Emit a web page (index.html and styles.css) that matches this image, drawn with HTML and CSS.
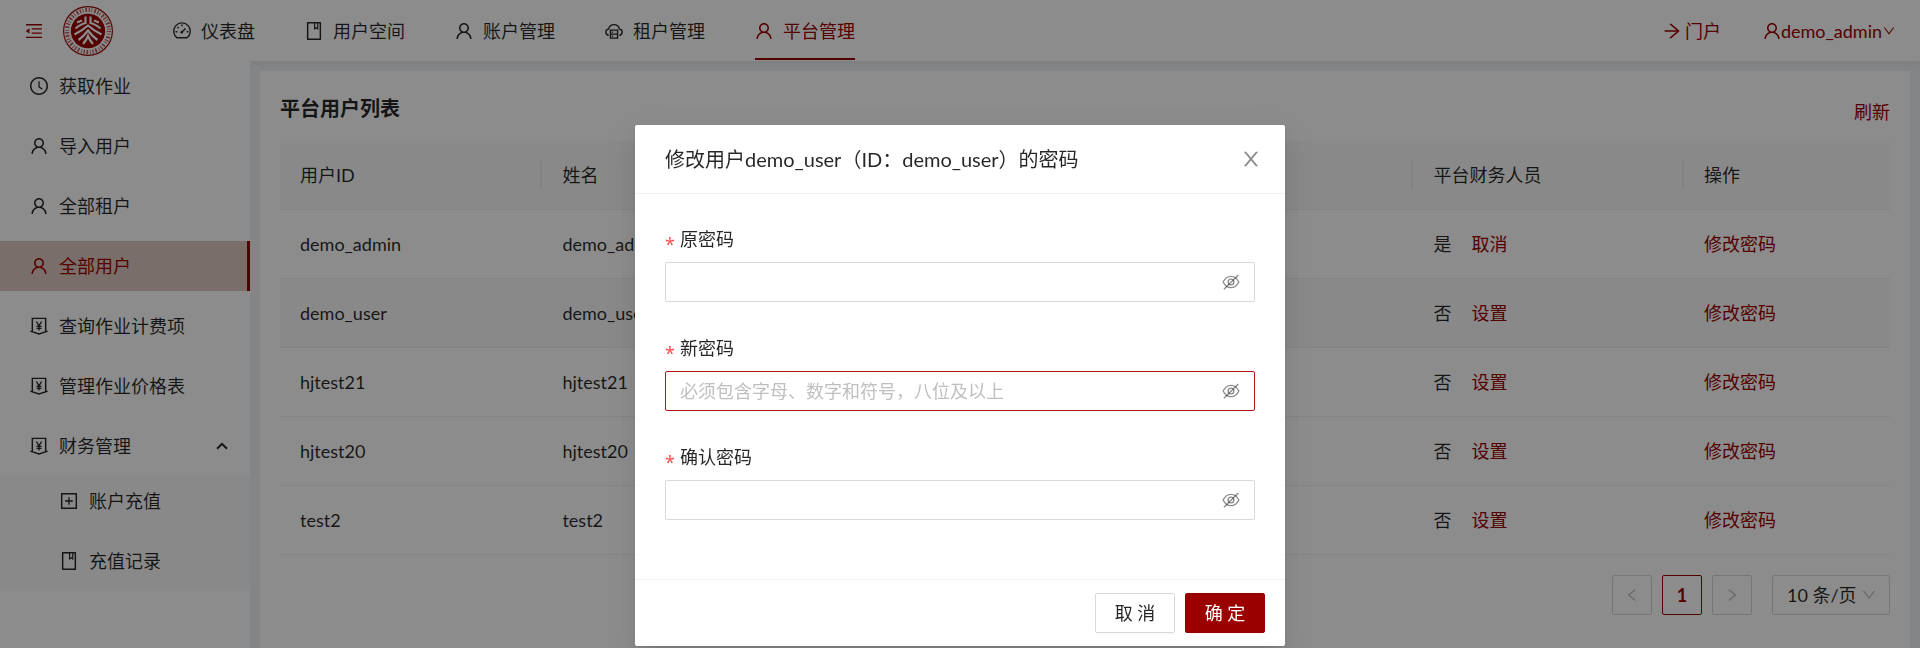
FILE: index.html
```html
<!DOCTYPE html>
<html lang="zh-CN">
<head>
<meta charset="utf-8">
<meta name="viewport" content="width=device-width, initial-scale=1">
<title>平台用户列表</title>
<link rel="stylesheet" href="styles.css">
</head>
<body>
<svg class="sprite" aria-hidden="true">
  <symbol id="i-user" viewBox="64 64 896 896"><path d="M858.5 763.6a374 374 0 00-80.6-119.5 375.63 375.63 0 00-119.5-80.6c-.4-.2-.8-.3-1.2-.5C719.5 518 760 444.7 760 362c0-137-111-248-248-248S264 225 264 362c0 82.7 40.5 156 102.8 201.1-.4.2-.8.3-1.2.5-44.8 18.9-85 46-119.5 80.6a375.63 375.63 0 00-80.6 119.5A371.7 371.7 0 00136 901.8a8 8 0 008 8.2h60c4.4 0 7.9-3.5 8-7.8 2-77.2 33-149.5 87.8-204.3 56.7-56.7 132-87.9 212.2-87.9s155.5 31.2 212.2 87.9C779 752.7 810 825 812 902.2c.1 4.4 3.6 7.8 8 7.8h60a8 8 0 008-8.2c-1-47.8-10.9-94.3-29.5-138.2zM512 534c-45.9 0-89.1-17.9-121.6-50.4S340 407.9 340 362c0-45.9 17.9-89.1 50.4-121.6S466.1 190 512 190s89.1 17.9 121.6 50.4S684 316.1 684 362c0 45.9-17.9 89.1-50.4 121.6S557.9 534 512 534z"/></symbol>
  <symbol id="i-close" viewBox="64 64 896 896"><path d="M563.8 512l262.5-312.9c4.4-5.2.7-13.1-6.1-13.1h-79.8c-4.7 0-9.2 2.1-12.3 5.7L511.6 449.8 295.1 191.7c-3-3.6-7.5-5.7-12.3-5.7H203c-6.8 0-10.5 7.9-6.1 13.1L459.4 512 196.9 824.9A7.95 7.95 0 00203 838h79.8c4.7 0 9.2-2.1 12.3-5.7l216.5-258.1 216.5 258.1c3 3.6 7.5 5.7 12.3 5.7h79.8c6.8 0 10.5-7.9 6.1-13.1L563.8 512z"/></symbol>
  <symbol id="i-clock" viewBox="64 64 896 896"><path d="M512 64C264.6 64 64 264.6 64 512s200.6 448 448 448 448-200.6 448-448S759.4 64 512 64zm0 820c-205.4 0-372-166.6-372-372s166.6-372 372-372 372 166.6 372 372-166.6 372-372 372z"/><path d="M686.7 638.6L544.1 535.5V288c0-4.4-3.6-8-8-8H488c-4.4 0-8 3.6-8 8v275.4c0 2.6 1.2 5 3.3 6.5l165.4 120.6c3.6 2.6 8.6 1.8 11.2-1.7l28.6-39c2.6-3.7 1.8-8.7-1.8-11.2z"/></symbol>
  <symbol id="i-book" viewBox="64 64 896 896"><path d="M832 64H192c-17.7 0-32 14.3-32 32v832c0 17.7 14.3 32 32 32h640c17.7 0 32-14.3 32-32V96c0-17.7-14.3-32-32-32zm-260 72h96v209.9L621.5 312 572 347.4V136zm220 752H232V136h280v296.9c0 3.3 1 6.6 3 9.3a15.9 15.9 0 0022.3 3.7l83.8-59.9 81.4 59.4c2.7 2 6 3.1 9.4 3.1 8.8 0 16-7.2 16-16V136h64v752z"/></symbol>
  <symbol id="i-plus" viewBox="64 64 896 896"><path d="M328 544h152v152c0 4.4 3.6 8 8 8h48c4.4 0 8-3.6 8-8V544h152c4.4 0 8-3.6 8-8v-48c0-4.4-3.6-8-8-8H544V328c0-4.4-3.6-8-8-8h-48c-4.4 0-8 3.6-8 8v152H328c-4.4 0-8 3.6-8 8v48c0 4.4 3.6 8 8 8z"/><path d="M880 112H144c-17.7 0-32 14.3-32 32v736c0 17.7 14.3 32 32 32h736c17.7 0 32-14.3 32-32V144c0-17.7-14.3-32-32-32zm-40 728H184V184h656v656z"/></symbol>
  <symbol id="i-down" viewBox="64 64 896 896"><path d="M884 256h-75c-5.1 0-9.9 2.5-12.9 6.6L512 654.2 227.9 262.6c-3-4.1-7.8-6.6-12.9-6.6h-75c-6.5 0-10.3 7.4-6.5 12.7l352.6 486.1c12.8 17.6 39 17.6 51.7 0l352.6-486.1c3.9-5.3.1-12.7-6.4-12.7z"/></symbol>
  <symbol id="i-left" viewBox="64 64 896 896"><path d="M724 218.3V141c0-6.7-7.7-10.4-12.9-6.3L260.3 486.8a31.86 31.86 0 000 50.3l450.8 352.1c5.3 4.1 12.9.4 12.9-6.3v-77.3c0-4.9-2.3-9.6-6.1-12.6l-360-281 360-281.1c3.8-3 6.1-7.7 6.1-12.6z"/></symbol>
  <symbol id="i-right" viewBox="64 64 896 896"><path d="M765.7 486.8L314.9 134.7A7.97 7.97 0 00302 141v77.3c0 4.9 2.3 9.6 6.1 12.6l360 281.1-360 281.1c-3.9 3-6.1 7.7-6.1 12.6V883c0 6.7 7.7 10.4 12.9 6.3l450.8-352.1a31.96 31.96 0 000-50.4z"/></symbol>
  <symbol id="i-arrow" viewBox="64 64 896 896"><path d="M869 487.8L491.2 159.9c-2.9-2.5-6.6-3.9-10.5-3.9h-88.5c-7.4 0-10.8 9.2-5.2 14l350.2 304H152c-4.4 0-8 3.6-8 8v60c0 4.4 3.6 8 8 8h585.1L386.9 854c-5.6 4.9-2.2 14 5.2 14h91.5c1.9 0 3.8-.7 5.2-2L869 536.2a32.07 32.07 0 000-48.4z"/></symbol>
  <symbol id="i-fold" viewBox="64 64 896 896"><path d="M408 442h480c4.4 0 8-3.6 8-8v-56c0-4.4-3.6-8-8-8H408c-4.4 0-8 3.6-8 8v56c0 4.4 3.6 8 8 8zm-8 204c0 4.4 3.6 8 8 8h480c4.4 0 8-3.6 8-8v-56c0-4.4-3.6-8-8-8H408c-4.4 0-8 3.6-8 8v56zm504-486H120c-4.4 0-8 3.6-8 8v56c0 4.4 3.6 8 8 8h784c4.4 0 8-3.6 8-8v-56c0-4.4-3.6-8-8-8zm0 632H120c-4.4 0-8 3.6-8 8v56c0 4.4 3.6 8 8 8h784c4.4 0 8-3.6 8-8v-56c0-4.4-3.6-8-8-8zM115.4 518.9L271.7 642c5.8 4.6 14.4.5 14.4-6.9V388.9c0-7.4-8.5-11.5-14.4-6.9L115.4 505.1a8.74 8.74 0 000 13.8z"/></symbol>
  <symbol id="i-dash" viewBox="64 64 896 896"><g fill="none" stroke="currentColor" stroke-width="68"><path d="M262 850A412 412 0 1 1 762 850Z" stroke-linejoin="round"/><path d="M512 190v90M190 548h90M744 548h90M290 316l58 58M500 576l190-190"/></g><circle cx="500" cy="580" r="62"/></symbol>
  <symbol id="i-cloud" viewBox="64 64 896 896"><g fill="none" stroke="currentColor" stroke-width="68"><path d="M250 732C60 690 60 440 240 420C310 120 714 120 784 420C964 440 964 690 774 732"/><path d="M334 466h356v400H334zM334 666h356"/><path d="M400 566h70M400 766h70"/></g></symbol>
  <symbol id="i-money" viewBox="64 64 896 896"><g fill="none" stroke="currentColor" stroke-width="72"><path d="M180 790V132h664v658"/><path d="M84 770l102 32 326 108 326-108 102-32"/><path d="M382 290l130 218 130-218M512 500v240M388 530h248M388 634h248" stroke-width="64"/></g></symbol>
  <symbol id="i-eye" viewBox="64 64 896 896"><g fill="none" stroke="currentColor" stroke-width="68"><path d="M120 512C210 330 345 230 512 230S814 330 904 512C814 694 679 794 512 794S210 694 120 512Z"/><circle cx="512" cy="512" r="142"/><path d="M160 876L876 160"/></g></symbol>
  <symbol id="i-caret" viewBox="0 0 12 8"><path d="M1 6.8L6 1.8L11 6.8" fill="none" stroke="currentColor" stroke-width="2"/></symbol>
</svg>

<header class="topbar">
  <button class="fold" type="button" aria-label="收起菜单"><svg class="icon"><use href="#i-fold"/></svg></button>
  <a class="logo" href="#" aria-label="首页">
    <svg viewBox="0 0 50 50">
      <circle cx="25" cy="25" r="24.4" fill="#fff" stroke="#9b0000" stroke-width="1.1"/>
      <circle cx="25" cy="25" r="17.2" fill="#9b0000"/>
      <circle cx="25" cy="25" r="21" fill="none" stroke="#9b0000" stroke-opacity=".65" stroke-width="4.2" stroke-dasharray="1.3 1.5 .8 2 1.8 1.6"/>
      <g fill="none" stroke="#fff" stroke-width="2.2">
        <path d="M22.5 10.5V17Q18 18 12.5 22.500M27.500 10.500V17Q32 18 37.500 22.500"/>
        <path d="M14 16.500L19 14.500M36 16.500L31 14.500"/>
        <path d="M11.500 28.500Q20 24 25 19.500Q30 24 38.500 28.500"/>
        <path d="M15.500 34Q21 30 25 24.500Q29 30 34.500 34"/>
        <path d="M20 38Q23.500 34 25 30Q26.500 34 30 38"/>
      </g>
    </svg>
  </a>
  <nav class="topnav">
    <a href="#"><svg class="icon"><use href="#i-dash"/></svg>仪表盘</a>
    <a href="#"><svg class="icon"><use href="#i-book"/></svg>用户空间</a>
    <a href="#"><svg class="icon"><use href="#i-user"/></svg>账户管理</a>
    <a href="#"><svg class="icon"><use href="#i-cloud"/></svg>租户管理</a>
    <a href="#" class="active"><svg class="icon"><use href="#i-user"/></svg>平台管理</a>
  </nav>
  <div class="account">
    <a href="#" class="portal"><svg class="icon"><use href="#i-arrow"/></svg>门户</a>
    <a href="#" class="me"><svg class="icon"><use href="#i-user"/></svg>demo_admin<svg class="icon tiny"><use href="#i-down"/></svg></a>
  </div>
</header>

<div class="layout">
  <nav class="side">
    <a href="#"><svg class="icon"><use href="#i-clock"/></svg>获取作业</a>
    <a href="#"><svg class="icon"><use href="#i-user"/></svg>导入用户</a>
    <a href="#"><svg class="icon"><use href="#i-user"/></svg>全部租户</a>
    <a href="#" class="active"><svg class="icon"><use href="#i-user"/></svg>全部用户</a>
    <a href="#"><svg class="icon"><use href="#i-money"/></svg>查询作业计费项</a>
    <a href="#"><svg class="icon"><use href="#i-money"/></svg>管理作业价格表</a>
    <a href="#"><svg class="icon"><use href="#i-money"/></svg>财务管理<svg class="caret"><use href="#i-caret"/></svg></a>
    <div class="submenu">
      <a href="#"><svg class="icon"><use href="#i-plus"/></svg>账户充值</a>
      <a href="#"><svg class="icon"><use href="#i-book"/></svg>充值记录</a>
    </div>
  </nav>

  <main class="content">
    <div class="page-head">
      <h1>平台用户列表</h1>
      <a href="#">刷新</a>
    </div>
    <table class="users">
      <colgroup><col class="c-id"><col class="c-name"><col class="c-fin"><col class="c-op"></colgroup>
      <thead><tr><th>用户ID</th><th>姓名</th><th>平台财务人员</th><th>操作</th></tr></thead>
      <tbody>
        <tr><td>demo_admin</td><td>demo_admin</td><td>是<a class="set" href="#">取消</a></td><td><a href="#">修改密码</a></td></tr>
        <tr class="hover"><td>demo_user</td><td>demo_user</td><td>否<a class="set" href="#">设置</a></td><td><a href="#">修改密码</a></td></tr>
        <tr><td>hjtest21</td><td>hjtest21</td><td>否<a class="set" href="#">设置</a></td><td><a href="#">修改密码</a></td></tr>
        <tr><td>hjtest20</td><td>hjtest20</td><td>否<a class="set" href="#">设置</a></td><td><a href="#">修改密码</a></td></tr>
        <tr><td>test2</td><td>test2</td><td>否<a class="set" href="#">设置</a></td><td><a href="#">修改密码</a></td></tr>
      </tbody>
    </table>
    <div class="pager">
      <button type="button" disabled aria-label="上一页"><svg class="icon small"><use href="#i-left"/></svg></button>
      <button type="button" class="current">1</button>
      <button type="button" disabled aria-label="下一页"><svg class="icon small"><use href="#i-right"/></svg></button>
      <div class="size">
        <select aria-label="每页条数"><option>10 条/页</option></select>
        <svg class="icon small"><use href="#i-down"/></svg>
      </div>
    </div>
  </main>
</div>

<div class="mask">
  <form class="modal" role="dialog" aria-labelledby="modal-title">
    <div class="modal-head">
      <h2 id="modal-title">修改用户demo_user（ID：demo_user）的密码</h2>
      <button type="button" class="close" aria-label="关闭"><svg class="icon large"><use href="#i-close"/></svg></button>
    </div>
    <div class="modal-body">
      <div class="field">
        <label for="old">原密码</label>
        <div class="input"><input id="old" type="password"><button type="button" aria-label="显示密码"><svg class="icon"><use href="#i-eye"/></svg></button></div>
      </div>
      <div class="field">
        <label for="new">新密码</label>
        <div class="input focus"><input id="new" type="password" placeholder="必须包含字母、数字和符号，八位及以上"><button type="button" aria-label="显示密码"><svg class="icon"><use href="#i-eye"/></svg></button></div>
      </div>
      <div class="field">
        <label for="again">确认密码</label>
        <div class="input"><input id="again" type="password"><button type="button" aria-label="显示密码"><svg class="icon"><use href="#i-eye"/></svg></button></div>
      </div>
    </div>
    <div class="modal-foot">
      <button type="button" class="btn">取 消</button>
      <button type="button" class="btn primary">确 定</button>
    </div>
  </form>
</div>
</body>
</html>
```

FILE: styles.css
```css
* { box-sizing: border-box; }

:root {
  --primary: #9b0000;
  --text: rgba(0, 0, 0, .85);
  --line: #f0f0f0;
  --border: #d9d9d9;
}

body {
  margin: 0;
  min-height: 100vh;
  display: flex;
  flex-direction: column;
  background: #f0f2f5;
  color: var(--text);
  font: 400 18px/28px Lato, "Noto Sans CJK SC", sans-serif;
  overflow: hidden;
}

a { color: var(--primary); text-decoration: none; }
button, input, select { font: inherit; color: inherit; }
button { cursor: pointer; }
h1, h2 { margin: 0; }

.sprite { position: absolute; width: 0; height: 0; }
.icon { width: 18px; height: 18px; flex: none; fill: currentColor; }
.icon.tiny { width: 12px; height: 12px; margin-left: 1px; }
.icon.small { width: 14px; height: 14px; }
.icon.large { width: 20px; height: 20px; }

.topbar {
  display: flex;
  align-items: center;
  height: 61px;
  padding: 0 25px;
  background: #fff;
  box-shadow: 0 2px 10px rgba(0, 0, 0, .06);
}
.fold { display: flex; padding: 0; border: 0; background: none; color: var(--primary); }
.logo { width: 50px; height: 50px; margin: 0 35px 0 20px; }
.logo svg { display: block; width: 50px; height: 50px; }

.topnav { display: flex; align-self: stretch; margin-bottom: 1px; }
.topnav a {
  display: flex;
  align-items: center;
  gap: 10px;
  margin: 0 25px;
  padding-top: 3px;
  border-bottom: 2px solid transparent;
  color: var(--text);
}
.topnav .active { color: var(--primary); border-color: var(--primary); }

.account { display: flex; gap: 42px; margin-left: auto; }
.account a { display: flex; align-items: center; }
.portal { gap: 4px; }

.layout { flex: 1; display: flex; gap: 10px; padding-right: 10px; }

.side { width: 250px; background: #fff; }
.side a {
  display: flex;
  align-items: center;
  gap: 11px;
  height: 50px;
  margin-bottom: 10px;
  padding: 0 22px 0 30px;
  color: var(--text);
}
.side .active {
  background: #dec8c3;
  color: var(--primary);
  border-right: 3px solid var(--primary);
}
.caret { width: 12px; height: 8px; margin-left: auto; }
.submenu { margin-top: -5px; padding-bottom: 5px; background: #fafafa; }
.submenu a { padding-left: 60px; }
.submenu a:last-child { margin-bottom: 0; }

.content { flex: 1; margin-top: 10px; padding: 20px; background: #fff; }
.page-head { display: flex; justify-content: space-between; align-items: flex-end; height: 35px; margin-bottom: 15px; }
.page-head h1 { font-size: 20px; font-weight: 700; line-height: 36px; }

.users { width: 100%; border-collapse: separate; border-spacing: 0; table-layout: fixed; }
.c-id { width: 16.3%; }
.c-fin { width: 16.8%; }
.c-op { width: 12.8%; }
.users th, .users td { height: 69px; padding: 0 20px; text-align: left; border-bottom: 1px solid var(--line); }
.users th { background: linear-gradient(#ededed, #ededed) right center / 2px 28px no-repeat #fafafa; font-weight: 400; }
.users th:last-child { background: #fafafa; }
.hover td { background: #fafafa; }
.set { margin-left: 20px; }

.pager { display: flex; justify-content: flex-end; gap: 10px; margin-top: 20px; }
.pager button {
  display: flex;
  align-items: center;
  justify-content: center;
  width: 40px;
  height: 40px;
  padding: 0;
  border: 1px solid var(--border);
  border-radius: 2px;
  background: #fff;
}
.pager button:disabled { color: rgba(0, 0, 0, .25); }
.pager .current { border-color: var(--primary); color: var(--primary); font-weight: 700; }
.size { position: relative; margin-left: 10px; }
.size select {
  appearance: none;
  width: 118px;
  height: 40px;
  padding: 0 14px;
  border: 1px solid var(--border);
  border-radius: 2px;
  background: #fff;
}
.size .icon { position: absolute; right: 14px; top: 13px; color: rgba(0, 0, 0, .25); pointer-events: none; }

.mask {
  position: fixed;
  inset: 0;
  display: flex;
  justify-content: center;
  align-items: flex-start;
  padding-top: 125px;
  background: rgba(0, 0, 0, .45);
}
.modal {
  width: 650px;
  background: #fff;
  border-radius: 2px;
  box-shadow: 0 4px 8px -5px rgba(0, 0, 0, .12), 0 8px 20px rgba(0, 0, 0, .08), 0 11px 35px 10px rgba(0, 0, 0, .05);
}
.modal-head {
  display: flex;
  justify-content: space-between;
  align-items: center;
  height: 69px;
  padding: 0 24px 0 30px;
  border-bottom: 1px solid var(--line);
}
.modal-head h2 { font-size: 20px; font-weight: 400; }
.close { display: flex; padding: 0; border: 0; background: none; color: rgba(0, 0, 0, .45); }
.modal-body { padding: 29px 30px; }
.field { margin-bottom: 30px; }
.field label { display: block; height: 39px; padding-top: 2px; }
.field label::before { content: "*"; margin-right: 5px; color: #ff4d4f; font-family: "Noto Sans", sans-serif; line-height: 1; vertical-align: sub; }
.input {
  display: flex;
  align-items: center;
  height: 40px;
  padding: 0 14px;
  border: 1px solid var(--border);
  border-radius: 2px;
}
.input.focus { border-color: #af1616; }
.input input { flex: 1; min-width: 0; padding: 0; border: 0; outline: 0; background: none; }
.input input::placeholder { color: #bfbfbf; }
.input button { display: flex; padding: 0; border: 0; background: none; color: rgba(0, 0, 0, .45); }
.modal-foot {
  display: flex;
  justify-content: flex-end;
  gap: 10px;
  padding: 13px 20px;
  border-top: 1px solid var(--line);
}
.btn {
  width: 80px;
  height: 40px;
  padding: 0;
  border: 1px solid var(--border);
  border-radius: 2px;
  background: #fff;
  box-shadow: 0 2px 0 rgba(0, 0, 0, .02);
}
.btn.primary { border-color: var(--primary); background: var(--primary); color: #fff; }
```
